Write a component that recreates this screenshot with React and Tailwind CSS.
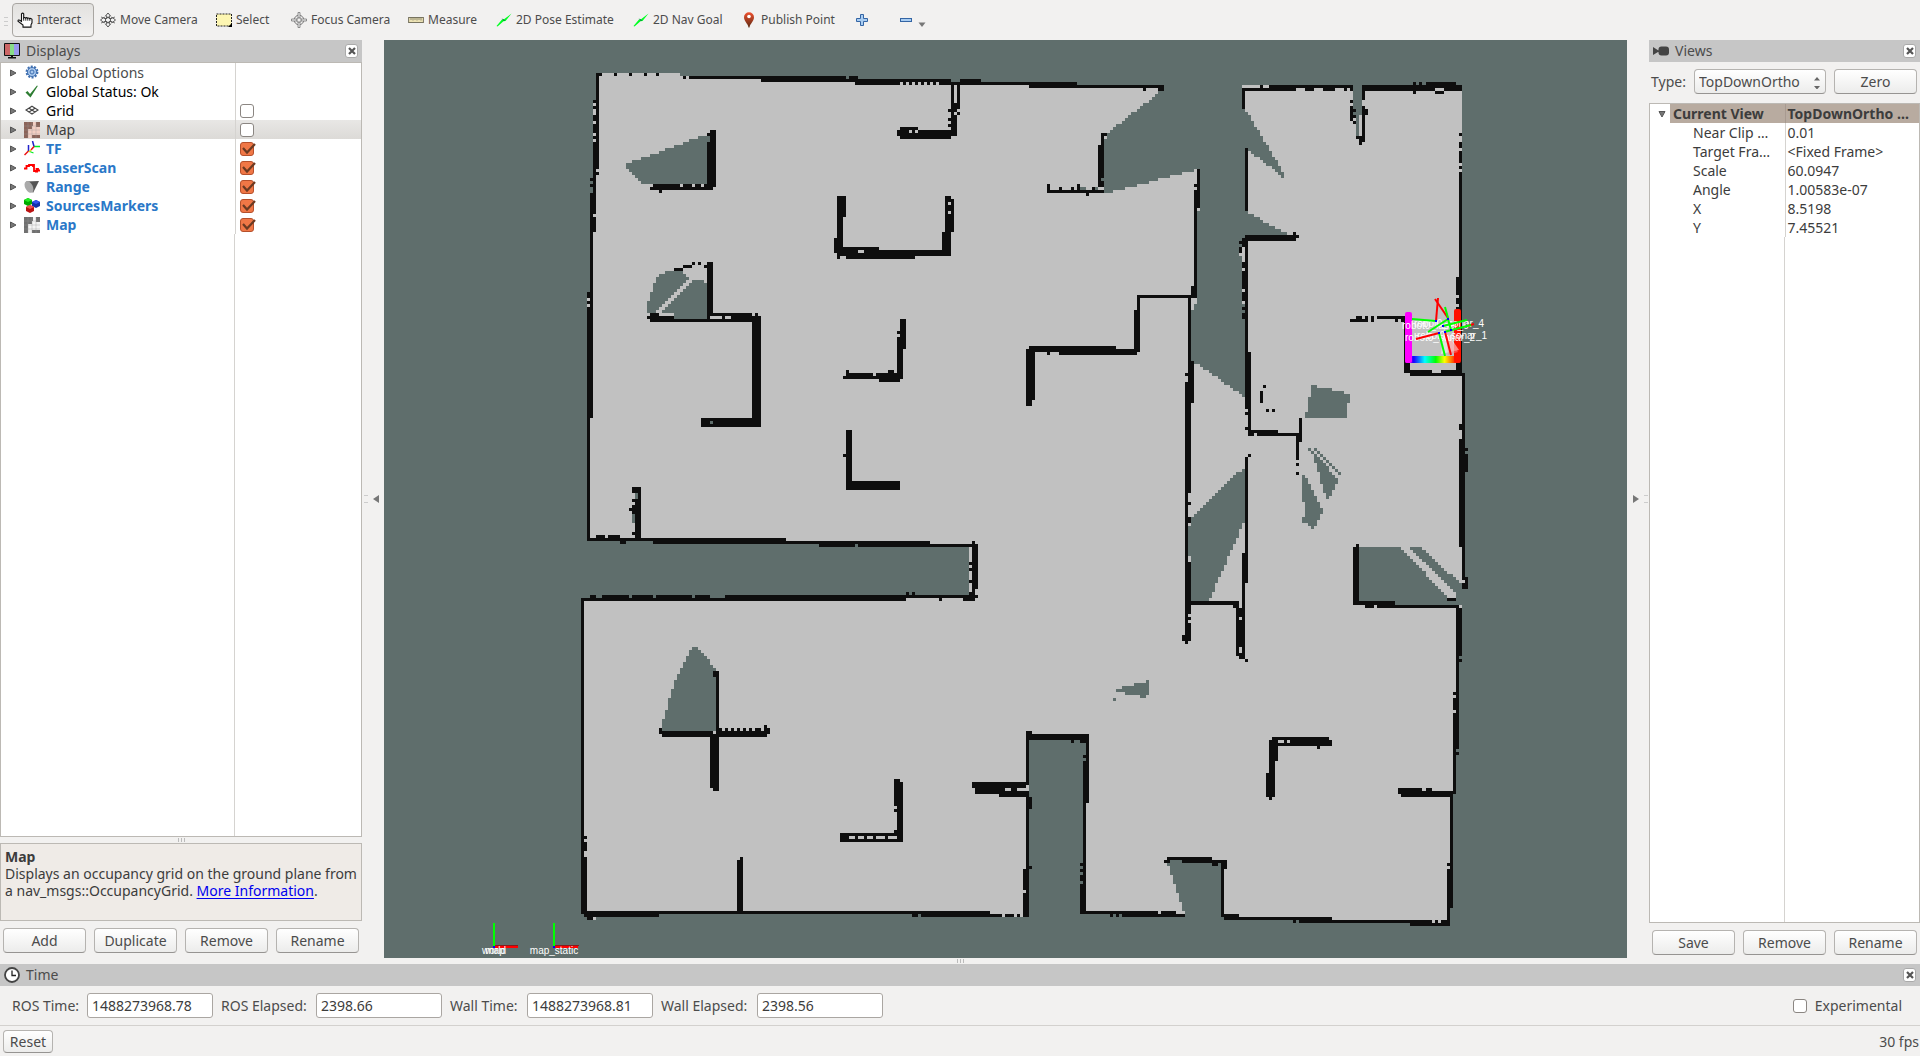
import React from "react";

const UNKNOWN = "#5f6e6c";
const FREE = "#c1c1c1";
const WALL = "#0e0e0e";

/* Occupancy grid, all values are in grid cells. */
const FREE_OUTLINE =
  "12,4 40,4 40,5 67,5 67,6 140,6 140,7 172,7 172,8 300,8 300,104 301,104 301,181 300,181 300,193 299,193 299,229 298,229 298,244 297,244 297,282 296,282 296,287 246,287 246,286 221,286 221,285 187,285 187,284 156,284 156,285 120,285 120,284 7,284 7,179 136,179 136,161 31,161 31,160 9,160 9,77 10,77 10,44 11,44 11,13 12,13";

const UNKNOWN_AREAS = [
  [[7, 161], [136, 161], [136, 178], [7, 178]],
  [[22, 34.4], [49, 24.4], [50, 25], [50, 41], [28, 41], [22, 35.6]],
  [[33, 71], [36, 70], [40, 70], [43, 73], [31, 84], [29, 84], [29, 81], [30, 78], [31, 75], [32, 73]],
  [[44, 73], [47, 73], [49, 74], [49, 86], [38, 86], [38, 84], [33.4, 84]],
  [[44, 195], [46, 195], [52, 202.5], [52, 223], [34, 223], [34, 221], [38, 207]],
  [[156, 226], [175, 226], [175, 290], [156, 290]],
  [[202, 266], [220, 266], [220, 290], [208, 290], [208, 284], [202, 267]],
  [[201, 8], [200, 10], [182, 24], [181, 27], [181, 44], [184, 43.5], [211, 36.5], [213, 36], [213, 49], [212, 50], [212, 80], [210, 83], [210, 100], [212, 101], [228, 112], [228, 60], [226, 60], [228, 58], [242.5, 58], [229, 50.5], [228, 50], [228, 30], [230, 30.5], [236, 35], [241, 39.5], [241, 37.5], [228, 16], [227, 8]],
  [[228, 136], [228, 153], [216, 180], [209, 180], [209, 155], [210, 152.5], [224, 138]],
  [[264, 8], [267, 8], [267, 18], [266, 18], [266, 25], [265, 25], [265, 18], [264, 18]],
  [[250, 130], [251, 130], [258, 138.5], [259, 140], [256, 146], [255, 146], [253, 139]],
  [[247, 138], [248, 138], [253.4, 148.5], [254, 150], [251, 156], [250, 156], [248, 154], [248, 147], [247, 147]],
  [[266, 162], [280, 162], [295, 179], [295, 181], [272, 181], [272, 180], [266, 180]],
  [[282, 162], [286, 162], [301, 175.5], [301, 181], [298, 181], [298, 178], [290, 170]],
];

const UNKNOWN_CELLS =
  "195 206 1 1;191 207 5 1;187 208 9 1;185 209 11 1;188 210 8 1;193 211 2 1;184 212 1 1;250 108 2 1;250 109 7 1;250 110 11 1;250 111 13 1;249 112 14 2;249 114 13 3;248 117 14 2;249 129 1 1;251 129 1 1;252 130 1 1;253 131 1 1;254 132 1 1;255 133 1 1;256 134 1 1;257 135 1 1;258 136 1 1;259 137 1 1;247 152 1 2;295 180 3 1";

const WALL_CELLS =
  // north-west room
  "12 4 2 1;18 4 1 1;23 4 1 1;28 4 1 1;32 4 1 1;41 5 1 1;43 5 52 1;67 6 63 1;96 5 3 1;98 7 15 1;114 7 1 1;116 7 1 1;118 7 1 1;120 7 1 1;122 7 1 1;124 7 1 1;126 7 4 1;133 6 7 1;130 7 42 1;156 8 45 1;194 9 1 1;199 9 2 1;" +
  "130 8 1 17;131 14 1 3;132 8 1 8;132 17 1 1;131 18 1 7;129 16 1 1;129 19 1 1;129 21 1 1;112 23 1 2;113 22 6 1;113 23 17 3;" +
  "12 5 1 31;12 37 1 1;11 13 1 1;11 15 1 1;11 18 1 2;11 21 1 3;11 25 1 1;11 27 1 30;10 39 1 1;10 41 1 1;10 44 1 75;9 77 1 2;9 80 1 1;9 82 1 77;" +
  "50 23 2 19;49 24 1 1;49 27 1 14;31 41 9 1;41 41 3 1;45 41 2 1;48 41 2 1;30 42 21 1;33 43 1 1;" +
  "92 45 3 7;92 52 2 10;91 59 1 5;92 62 14 1;92 63 38 2;92 65 1 1;95 65 23 1;127 57 3 8;128 46 3 11;128 45 2 1;" +
  "44 67 1 1;46 67 1 1;41 68 3 1;38 69 3 1;49 67 2 19;48 68 1 1;30 84 3 1;29 85 9 1;30 86 37 1;50 84 14 2;65 84 1 1;64 85 3 37;47 119 20 3;" +
  "113 86 2 10;112 92 2 14;112 90 1 1;94 105 19 1;95 104 9 1;95 103 1 1;105 104 8 1;109 103 2 1;106 106 7 1;" +
  "95 123 2 20;94 131 1 1;95 140 18 3;24 142 3 2;26 144 1 16;25 146 1 14;24 146 1 1;24 148 1 3;23 149 1 1;24 157 1 1;" +
  "9 159 66 1;9 158 1 1;12 158 3 1;16 158 4 1;20 160 2 1;31 160 92 1;86 161 12 1;99 161 40 1;137 160 1 1;" +
  // corridor and south-west room
  "137 161 2 15;137 176 1 4;138 178 1 1;136 167 1 1;136 169 1 1;136 173 1 1;136 177 1 1;55 178 83 1;10 178 2 1;14 178 9 1;24 178 7 1;32 178 12 1;45 178 5 1;7 179 108 1;115 177 1 1;117 177 1 1;126 179 1 1;134 179 4 1;" +
  "7 179 1 105;8 258 1 1;8 260 1 3;8 265 1 19;7 283 136 1;8 284 25 1;9 285 2 1;117 284 2 1;120 284 27 1;148 284 3 1;152 284 1 1;154 269 2 16;155 223 1 47;155 223 2 1;156 245 1 4;156 268 1 1;" +
  "51 203 2 2;52 205 1 18;33 222 1 2;34 223 17 2;50 224 19 1;52 223 17 1;53 222 1 1;55 222 1 1;57 222 1 1;59 222 1 1;61 222 1 1;63 222 1 1;65 222 2 1;68 221 1 3;69 222 1 2;50 225 3 17;51 242 2 1;" +
  "111 239 2 1;111 240 3 8;112 248 2 12;111 249 1 1;111 256 1 1;93 257 21 3;137 240 18 2;138 242 17 2;155 243 1 1;146 244 10 1;59 266 2 17;60 265 1 1;" +
  // south-east room
  "156 224 20 2;170 226 1 1;173 226 3 1;175 226 1 21;174 231 1 1;174 233 2 14;174 247 1 37;173 267 1 1;173 269 1 1;173 271 1 2;173 274 2 10;173 283 26 1;200 283 5 1;183 284 1 1;185 284 1 1;187 284 21 1;" +
  "202 265 15 1;201 266 2 1;207 266 15 1;217 267 2 1;220 267 2 2;220 269 1 16;221 284 5 1;221 285 36 1;244 286 1 1;246 286 50 1;283 287 13 1;295 269 2 13;295 282 1 5;295 267 1 1;296 243 1 30;" +
  "297 210 1 1;297 212 1 4;297 217 1 27;298 193 1 36;298 230 1 1;299 193 1 5;299 199 1 1;279 242 8 2;280 243 17 2;288 242 2 1;237 225 19 1;236 226 21 2;252 228 1 1;236 228 3 5;236 233 2 12;235 237 1 8;236 245 1 1;" +
  // centre shaft
  "208 104 1 1;209 78 1 29;210 100 1 14;208 107 2 37;208 144 1 43;209 147 1 1;209 152 1 2;208 167 2 17;209 185 1 1;208 187 2 6;207 191 1 2;208 193 1 1;210 180 16 1;224 181 2 1;225 182 3 16;226 198 2 1;228 199 1 1;227 164 1 18;228 132 1 42;229 131 1 1;" +
  "229 97 1 28;228 117 1 1;228 122 1 1;229 123 10 1;229 124 17 1;234 108 1 1;233 110 1 4;235 116 1 1;237 116 1 1;245 124 1 9;246 119 1 8;245 134 1 1;245 137 1 1;" +
  "180 24 2 1;180 24 1 18;179 28 1 14;162 43 19 1;162 41 1 2;166 42 1 1;170 42 1 1;172 41 1 2;177 42 1 1;175 44 1 1;212 36 1 13;211 43 1 36;211 41 1 1;210 75 2 4;192 78 18 1;192 78 1 19;191 83 1 14;156 95 29 1;155 96 37 1;166 97 26 1;155 97 3 16;162 97 1 1;155 113 2 2;" +
  // north-east room
  "227 9 1 7;228 29 1 21;228 58 17 2;244 57 1 1;245 58 1 1;227 59 1 3;228 60 1 56;226 60 1 1;226 62 1 2;227 67 1 2;227 70 1 6;227 77 1 3;227 82 1 1;227 84 1 2;236 8 28 1;227 9 18 1;248 9 3 1;254 9 4 1;261 9 1 1;263 9 1 1;233 8 1 1;" +
  "267 8 33 2;284 7 1 1;286 7 1 1;288 7 10 1;291 10 3 1;284 10 1 1;267 10 1 3;267 15 1 12;268 16 1 2;263 13 1 1;263 15 1 5;264 16 1 1;264 18 1 1;264 20 1 1;265 25 2 1;266 26 1 2;" +
  "299 24 1 1;299 27 1 2;299 30 1 4;299 35 1 1;299 37 1 67;298 72 1 6;298 79 1 2;298 82 1 22;263 86 6 1;265 85 2 1;268 85 1 1;270 85 1 2;272 85 10 1;278 86 1 1;280 86 2 1;281 86 2 18;283 103 7 1;293 103 5 1;283 104 18 1;" +
  "300 104 1 71;299 121 1 2;299 126 1 36;301 129 1 1;301 131 1 6;301 172 1 4;300 173 1 3;264 162 2 19;265 161 1 1;264 180 14 1;268 181 3 1;272 181 27 1;295 179 3 1;298 182 2 11";

const FREE_CELLS =
  "116 23 1 1;118 23 1 1;11 51 1 1;129 47 1 1;129 50 1 1;99 63 2 1;50 85 4 1;55 85 2 1;9 79 1 1;9 81 1 1;136 162 1 5;136 168 1 1;136 170 1 3;136 174 1 3;11 285 1 1;154 276 1 1;155 241 1 2;96 258 2 1;99 258 2 1;102 258 2 1;105 258 3 1;109 258 3 1;148 242 2 1;152 242 4 1;" +
  "290 286 1 1;292 286 1 1;239 226 2 1;242 226 1 1;209 144 1 3;209 148 1 4;209 154 1 1;209 165 1 2;209 184 1 1;209 186 1 1;226 185 1 1;226 195 1 2;231 124 1 1;210 80 1 3;226 64 1 1;227 62 1 5;227 69 1 1;227 76 1 1;227 80 1 1;291 9 3 1;266 21 1 4;299 173 2 1;42 5 1 1";

const UNKNOWN_SPECKS = "50 120 1 1;25 144 1 2;24 151 1 3;173 42 2 1;178 42 1 1;180 39 1 1;264 17 1 1;130 6 3 1";

const cellsPath = (list) =>
  list
    .split(";")
    .map((c) => {
      const [x, y, w, h] = c.split(" ");
      return `M${x} ${y}h${w}v${h}h-${w}z`;
    })
    .join("");

/* Fills a polygon with whole grid cells so that its slopes come out stepped. */
function rasterize(poly) {
  const ys = poly.map((p) => p[1]);
  let d = "";
  for (let y = Math.floor(Math.min(...ys)); y < Math.max(...ys); y++) {
    const cy = y + 0.5;
    const hits = [];
    poly.forEach(([x1, y1], i) => {
      const [x2, y2] = poly[(i + 1) % poly.length];
      if (y1 <= cy !== y2 <= cy) hits.push(x1 + ((cy - y1) * (x2 - x1)) / (y2 - y1));
    });
    hits.sort((a, b) => a - b);
    for (let i = 0; i + 1 < hits.length; i += 2) {
      const a = Math.round(hits[i]);
      const b = Math.round(hits[i + 1]);
      if (b > a) d += `M${a} ${y}h${b - a}v1h${a - b}z`;
    }
  }
  return d;
}

const AXES = [
  ["#0f0", 1412, 319, 1436, 321],
  ["#f00", 1436, 321, 1438, 298],
  ["#f00", 1435, 299, 1448, 318],
  ["#0f0", 1445, 307, 1448, 318],
  ["#0f0", 1428, 332, 1448, 319],
  ["#0f0", 1448, 319, 1451, 330],
  ["#0f0", 1443, 326, 1467, 320],
  ["#f00", 1467, 326, 1474, 324],
  ["#0f0", 1444, 332, 1471, 325],
  ["#f00", 1416, 339, 1439, 333],
  ["#0f0", 1439, 333, 1445, 356],
  ["#f00", 1445, 332, 1451, 355],
];

function MapView() {
  return (
    <svg className="block h-full w-full" viewBox="384 40 1243 918" preserveAspectRatio="xMidYMid slice" role="img" aria-label="Map view">
      <defs>
        <linearGradient id="scan" x1="0" x2="1">
          <stop offset="0" stopColor="#f0f" />
          <stop offset=".16" stopColor="#1a00ff" />
          <stop offset=".36" stopColor="#0ff" />
          <stop offset=".56" stopColor="#0f0" />
          <stop offset=".72" stopColor="#ff0" />
          <stop offset=".9" stopColor="#f30" />
        </linearGradient>
      </defs>
      <g transform="translate(560.15 60.65) scale(3.0047)" shapeRendering="crispEdges">
        <polygon points={FREE_OUTLINE} fill={FREE} />
        <path d={UNKNOWN_AREAS.map(rasterize).join("")} fill={UNKNOWN} />
        <path d={cellsPath(UNKNOWN_CELLS)} fill={UNKNOWN} />
        <path d={cellsPath(WALL_CELLS)} fill={WALL} />
        <path d={cellsPath(FREE_CELLS)} fill={FREE} />
        <path d={cellsPath(UNKNOWN_SPECKS)} fill={UNKNOWN} />
      </g>
      <rect x="1405" y="356" width="55" height="7" rx="2" fill="url(#scan)" />
      <rect x="1405" y="312" width="7" height="51" rx="2" fill="#f0f" />
      <rect x="1454" y="309" width="7" height="54" rx="2" fill="#f10" />
      <path d="M1444 328L1459 350L1441 354z" fill="#fff" opacity=".5" />
      <path d="M1446 330L1458 352L1448 355z" fill="#f88" opacity=".5" />
      <g fill="#fff" className="font-['Liberation_Sans'] text-[10px]">
        <text x="1414" y="327">robot0_sonar_4</text>
        <text x="1402" y="329">robot0_laser_0</text>
        <text x="1417" y="339">robot0_sonar_1</text>
        <text x="1405" y="341">robot0_sonar_2</text>
      </g>
      {AXES.map(([c, a, b, e, f], i) => (
        <line key={i} x1={a} y1={b} x2={e} y2={f} stroke={c} strokeWidth="2" />
      ))}
      <g fill="#00f">
        {[[1436, 321], [1448, 319], [1443, 326], [1451, 330], [1445, 332], [1439, 333]].map(([x, y]) => (
          <rect key={x} x={x - 1} y={y - 1} width="2" height="2" />
        ))}
      </g>
      <g shapeRendering="crispEdges">
        <path d="M494 945h24v3h-24zM554 945h24v3h-24z" fill="#f00" />
        <path d="M494 945h24v1h-24zM554 945h25v1h-25z" fill="#8b1a1a" />
        <path d="M493 923h2v23h-2zM553 923h2v23h-2z" fill="#0f0" />
        <path d="M493 946h2v2h-2zM553 946h2v2h-2z" fill="#00f" />
      </g>
      <g fill="#fff" textAnchor="middle" className="font-['Liberation_Sans'] text-[10px]">
        <text x="494" y="954">world</text>
        <text x="495" y="954">map</text>
        <text x="554" y="954">map_static</text>
      </g>
    </svg>
  );
}

/* ---------- icons ---------- */
const Svg = ({ children, box = "0 0 16 16", className = "h-4 w-4" }) => (
  <svg viewBox={box} className={`shrink-0 ${className}`} fill="none" aria-hidden="true">
    {children}
  </svg>
);
const HandIcon = () => (
  <Svg>
    <path d="M4.500 9.500V1.800q1.200-1.400 2.200 0V6q1-1.200 2 .2 1-1.200 2 .2 1-1 2 .3 1.300-.9 2.300.7v3.400l-1 2v2.300H6v-2L1 9.200q0-1.800 1.800-1z" fill="#fff" stroke="#111" strokeWidth="1.100" />
    <path d="M6.700 5.500v3.200M8.800 6.200v2.500M10.800 6.400v2.300M12.800 6.800v2" stroke="#111" strokeWidth=".9" />
  </Svg>
);
const MoveIcon = () => (
  <Svg>
    <path d="M8 1l2.500 3H9.200v2.500h2.600V5L15.500 8l-3.700 3V9.500H9.200V12h1.300L8 15l-2.500-3h1.300V9.500H4.200V11L.5 8l3.700-3v1.500h2.600V4H5.500z" fill="#f4f4f4" stroke="#555" />
    <circle cx="8" cy="8" r="2.600" stroke="#555" />
    <path d="M1 5l3 1M15 5l-3 1M1 11l3-1M15 11l-3-1" stroke="#777" />
  </Svg>
);
const SelectIcon = () => (
  <Svg>
    <rect x=".5" y="2" width="15" height="12" fill="#fdf6b2" stroke="#222" strokeDasharray="2 1" />
    <path d="M16 11v4h-4z" fill="#000" />
  </Svg>
);
const FocusIcon = () => (
  <Svg>
    <circle cx="8" cy="8" r="4.800" stroke="#777" />
    <circle cx="8" cy="8" r="2.500" stroke="#777" />
    <path d="M7 .5h2V5L8 6.500 7 5zM7 15.500h2V11L8 9.500 7 11zM.5 7v2H5l1.500-1L5 7zM15.500 7v2H11L9.500 8 11 7z" fill="#eee" stroke="#777" strokeWidth=".8" />
  </Svg>
);
const RulerIcon = () => (
  <Svg>
    <rect x=".6" y="5.500" width="14.800" height="5" fill="#ece2b4" stroke="#77735f" />
    <path d="M3 6v2M5 6v2.500M7 6v2M9 6v2.500M11 6v2M13 6v2.500" stroke="#77735f" strokeWidth=".8" />
  </Svg>
);
const ArrowIcon = () => (
  <Svg>
    <path d="M.5 14L6 7.500 8 7.200 15.500 1.500 9.500 9 7.500 9.300 1.500 14.500z" fill="#0f2" />
    <path d="M6.500 6.800l2 2.200" stroke="#064" />
  </Svg>
);
const PinIcon = () => (
  <Svg>
    <defs>
      <linearGradient id="pin" x1="0" x2="0" y1="0" y2="1">
        <stop offset="0" stopColor="#f0512f" />
        <stop offset="1" stopColor="#5b2a12" />
      </linearGradient>
    </defs>
    <path d="M8 .3a5 5 0 015 5c0 4-4 6.500-4.500 10.200h-1C7 11.800 3 9.300 3 5.300a5 5 0 015-5z" fill="url(#pin)" />
    <circle cx="8" cy="4.500" r="1.800" fill="#fff" />
  </Svg>
);
const PlusIcon = () => (
  <Svg>
    <path d="M6.500 2.500h3v4h4v3h-4v4h-3v-4h-4v-3h4z" fill="#a9cdf2" stroke="#3465a4" />
  </Svg>
);
const MinusIcon = () => (
  <Svg>
    <rect x="2.500" y="6.500" width="11" height="3" fill="#a9cdf2" stroke="#3465a4" />
  </Svg>
);
const MonitorIcon = () => (
  <Svg>
    <rect x="0" y="0" width="16" height="13" rx="1" fill="#111" />
    <path d="M1 1h5v11H1z" fill="#c66" />
    <path d="M6 1h4v11H6z" fill="#8d8" />
    <path d="M10 1h5v11h-5z" fill="#99e" />
    <path d="M7 13h2v1h3v1.500H4V14h3z" fill="#111" />
  </Svg>
);
const CameraIcon = () => (
  <Svg>
    <rect x="5.500" y="3.500" width="10.500" height="9" rx="3" fill="#444" />
    <path d="M0 4l5 3.300h1v1.600H5L0 12z" fill="#444" />
  </Svg>
);
const ClockIcon = () => (
  <Svg>
    <circle cx="8" cy="8" r="7" fill="#fff" stroke="#444" strokeWidth="1.800" />
    <path d="M8 3.500V8.500h4" stroke="#222" strokeWidth="1.300" />
  </Svg>
);
const GearIcon = () => (
  <Svg>
    <circle cx="8" cy="7" r="5.300" stroke="#3f6fb0" strokeWidth="2.200" strokeDasharray="2 1.300" />
    <circle cx="8" cy="7" r="4.500" fill="#a8c8ee" stroke="#3f6fb0" />
    <circle cx="8" cy="7" r="2" stroke="#3f6fb0" />
  </Svg>
);
const CheckIcon = () => (
  <Svg>
    <path d="M1.500 8.500L3.500 7l2.500 3L13 1.500l.8.4L6.500 13.500z" fill="#2e7d32" />
  </Svg>
);
const GridIcon = () => (
  <Svg>
    <path d="M8 3.200L14 7 8 11 2 7zM5 5.200l6 3.800M11 5.200L5 9" stroke="#444" strokeWidth="1.100" />
  </Svg>
);
const MapIcon = ({ dark, light }) => (
  <Svg>
    <rect width="16" height="16" fill={light} />
    <path d="M0 0h9v4H8v3H4v9H0zM12 0h4v5h-4zM8 13h8v3H8z" fill={dark} />
    <path d="M4 0v16M8 0v16M12 0v16M0 4h16M0 8h16M0 12h16" stroke="#999" strokeOpacity=".45" strokeWidth=".8" />
  </Svg>
);
const TfIcon = () => (
  <Svg>
    <path d="M10 5.500h6M4.500 10l5 2" stroke="#0e2" strokeWidth="1.300" />
    <path d="M8.500 0L10 5.500M4.500 4v6" stroke="#22c" strokeWidth="1.500" />
    <path d="M10 5.500L7 9M4.500 10L.5 14" stroke="#e11" strokeWidth="1.500" />
    <path d="M7 9l-2 2" stroke="#dd2" strokeWidth="1.300" />
  </Svg>
);
const LaserIcon = () => (
  <Svg>
    <path d="M0 8.500h2.500V6h2.500V5h5v6h2.500V9h1.500v1.500h2" stroke="#f00" strokeWidth="1.800" />
    <path d="M9 4v3M11 11.500h3" stroke="#f00" strokeWidth="1.800" />
  </Svg>
);
const RangeIcon = () => (
  <Svg>
    <path d="M2 2.500l13-.5-6 12z" fill="#555" />
    <ellipse cx="5" cy="8" rx="3.800" ry="6.300" transform="rotate(-28 5 8)" fill="#aaa" />
  </Svg>
);
const Cube = ({ x, y, c, t }) => (
  <g>
    <path d={`M${x} ${y}l4-2 4 2v4l-4 2-4-2z`} fill={c} />
    <path d={`M${x} ${y}l4-2 4 2-4 2z`} fill={t} />
  </g>
);
const MarkersIcon = () => (
  <Svg>
    <Cube x={0} y={2} c="#0a0" t="#2e2" />
    <Cube x={8} y={4} c="#13a" t="#35e" />
    <Cube x={2} y={9} c="#b11" t="#e55" />
  </Svg>
);

/* ---------- shared parts ---------- */
const BTN =
  "rounded-[4px] border border-[#b5b3b0] border-b-[#969492] bg-gradient-to-b from-white to-[#ececeb] text-[14px] leading-[21px] text-[#4c4c4c]";
const PushButton = ({ children, className = "h-[25px] w-[83px]" }) => (
  <button type="button" className={`text-center ${BTN} ${className}`}>
    {children}
  </button>
);

const DockTitle = ({ icon, children }) => (
  <header className="flex h-[22px] shrink-0 items-center bg-[#c6c6c6] pr-1 pl-1">
    {icon}
    <h2 className="ml-[6px] flex-1 text-[14px] leading-[22px]">{children}</h2>
    <button type="button" aria-label={`Close ${children}`} className="grid h-[14px] w-[13px] place-items-center rounded-[3px] border border-[#aaa] bg-white">
      <Svg box="0 0 8 8" className="h-2 w-2">
        <path d="M1 1l6 6M7 1L1 7" stroke="#555" strokeWidth="2.200" />
      </Svg>
    </button>
  </header>
);

const Triangle = ({ open }) => (
  <Svg box="0 0 8 8" className="h-2 w-2">
    <path d={open ? "M1 1.500h6L4 7z" : "M1.500 1l5.500 3-5.500 3z"} fill="#777" stroke="#555" />
  </Svg>
);

const CheckBox = ({ label, checked }) => (
  <span className="relative block h-[14px] w-[14px]">
    <input
      type="checkbox"
      aria-label={label}
      defaultChecked={checked}
      className="peer block h-[14px] w-[14px] appearance-none rounded-[3px] border border-[#8b8682] bg-white checked:border-[#b5502c] checked:bg-[#f07746]"
    />
    <svg viewBox="0 0 16 14" className="pointer-events-none absolute top-0 left-0 hidden h-[14px] w-4 peer-checked:block" fill="none" aria-hidden="true">
      <path d="M3 6l4 4.500L15 2" stroke="#6b3a22" strokeWidth="2.200" />
    </svg>
  </span>
);

const DISPLAYS = [
  { name: "Global Options", icon: <GearIcon />, tone: "text-[#4c4c4c]" },
  { name: "Global Status: Ok", icon: <CheckIcon />, tone: "text-black" },
  { name: "Grid", icon: <GridIcon />, tone: "text-black", on: false },
  { name: "Map", icon: <MapIcon dark="#8b6459" light="#f3cfc3" />, tone: "text-[#3c3c3c]", on: false, selected: true },
  { name: "TF", icon: <TfIcon />, tone: "font-bold text-[#2a78c8]", on: true },
  { name: "LaserScan", icon: <LaserIcon />, tone: "font-bold text-[#2a78c8]", on: true },
  { name: "Range", icon: <RangeIcon />, tone: "font-bold text-[#2a78c8]", on: true },
  { name: "SourcesMarkers", icon: <MarkersIcon />, tone: "font-bold text-[#2a78c8]", on: true },
  { name: "Map", icon: <MapIcon dark="#707070" light="#f4f4f4" />, tone: "font-bold text-[#2a78c8]", on: true },
];

const VIEW_PROPS = [
  ["Near Clip …", "0.01"],
  ["Target Fra…", "<Fixed Frame>"],
  ["Scale", "60.0947"],
  ["Angle", "1.00583e-07"],
  ["X", "8.5198"],
  ["Y", "7.45521"],
];

const TOOLS = [
  ["Move Camera", <MoveIcon />, "w-[116px]"],
  ["Select", <SelectIcon />, "w-[75px]"],
  ["Focus Camera", <FocusIcon />, "w-[117px]"],
  ["Measure", <RulerIcon />, "w-[88px]"],
  ["2D Pose Estimate", <ArrowIcon />, "w-[137px]"],
  ["2D Nav Goal", <ArrowIcon />, "w-[108px]"],
  ["Publish Point", <PinIcon />, "w-[113px]"],
];

const TIMES = [
  ["ROS Time:", "1488273968.78", "w-[67px]"],
  ["ROS Elapsed:", "2398.66", "w-[87px]"],
  ["Wall Time:", "1488273968.81", "w-[69px]"],
  ["Wall Elapsed:", "2398.56", "w-[88px]"],
];

const Toolbar = () => (
  <nav aria-label="Tools" className="flex h-10 shrink-0 items-start pt-[3px] pl-1 text-[12px] text-[#4c4c4c]">
    <span className="mt-[14px] flex w-2 flex-col gap-[3px]" aria-hidden="true">
      <i className="h-px w-1 bg-[#ccc]" />
      <i className="h-px w-1 bg-[#ccc]" />
      <i className="h-px w-1 bg-[#ccc]" />
    </span>
    <button type="button" aria-pressed="true" className="flex h-[34px] w-[82px] items-center gap-1 rounded-[4px] border border-[#a9a6a2] bg-gradient-to-b from-[#e2e1df] to-[#f3f2f1] pl-1">
      <HandIcon />
      Interact
    </button>
    <div className="flex h-[34px] items-center pl-[6px]">
      {TOOLS.map(([name, icon, width]) => (
        <button key={name} type="button" className={`flex h-[30px] items-center gap-1 whitespace-nowrap ${width}`}>
          {icon}
          {name}
        </button>
      ))}
      <button type="button" aria-label="Add tool" className="w-11">
        <PlusIcon />
      </button>
      <button type="button" aria-label="Remove tool" className="flex items-end gap-1">
        <MinusIcon />
        <Svg box="0 0 8 6" className="h-[6px] w-2">
          <path d="M.5.5h7L4 5z" fill="#777" />
        </Svg>
      </button>
    </div>
  </nav>
);

const DisplaysDock = () => (
  <aside className="flex w-[362px] shrink-0 flex-col">
    <DockTitle icon={<MonitorIcon />}>Displays</DockTitle>
    <div className="flex min-h-0 flex-1 flex-col border border-[#bcb9b4] bg-white">
      <table className="w-full table-fixed border-collapse">
        <colgroup>
          <col className="w-[234px]" />
          <col />
        </colgroup>
        <tbody>
          {DISPLAYS.map((d, i) => (
            <tr key={i} className={d.selected ? "h-[19px] bg-gradient-to-b from-[#e8e7e5] to-[#dcdad7]" : "h-[19px]"}>
              <td className="border-r border-[#d5d3d0] p-0">
                <div className="flex h-[19px] items-center pl-2">
                  <Triangle />
                  <span className="ml-[7px]">{d.icon}</span>
                  <span className={`ml-[6px] text-[14px] leading-[19px] ${d.tone}`}>{d.name}</span>
                </div>
              </td>
              <td className="p-0 pl-1">{d.on !== undefined && <CheckBox label={`${d.name} enabled`} checked={d.on} />}</td>
            </tr>
          ))}
        </tbody>
      </table>
      <div className="w-[234px] flex-1 border-r border-[#d5d3d0]" />
    </div>
    <div className="flex h-[6px] items-center justify-center gap-[2px]" aria-hidden="true">
      <i className="h-1 w-px bg-[#bbb]" />
      <i className="h-1 w-px bg-[#bbb]" />
      <i className="h-1 w-px bg-[#bbb]" />
    </div>
    <section className="h-[78px] border border-[#bcb9b4] bg-[#efebe7] px-1 pt-1 text-[14px] leading-[17px] text-[#3c3c3c]">
      <h3 className="font-bold">Map</h3>
      <p>
        Displays an occupancy grid on the ground plane from a nav_msgs::OccupancyGrid.{" "}
        <a href="#more" className="text-[#0000ee] underline underline-offset-2">
          More Information
        </a>
        .
      </p>
    </section>
    <div className="flex gap-2 px-[3px] pt-[7px] pb-[5px]">
      <PushButton>Add</PushButton>
      <PushButton>Duplicate</PushButton>
      <PushButton>Remove</PushButton>
      <PushButton>Rename</PushButton>
    </div>
  </aside>
);

const ViewsDock = () => (
  <aside className="flex w-[271px] shrink-0 flex-col">
    <DockTitle icon={<CameraIcon />}>Views</DockTitle>
    <div className="flex items-center gap-2 pt-[7px] pr-[3px] pb-[9px] pl-[2px]">
      <label htmlFor="view-type" className="w-[35px] text-[14px]">
        Type:
      </label>
      <span className="relative flex-1">
        <select id="view-type" className={`block h-[25px] w-full appearance-none pl-1 ${BTN}`}>
          <option>TopDownOrtho</option>
        </select>
        <svg viewBox="0 0 6 12" className="pointer-events-none absolute top-2 right-[6px] h-3 w-[6px]" aria-hidden="true">
          <path d="M0 3.500L3 0l3 3.500zM0 9l3 3.500L6 9z" fill="#666" />
        </svg>
      </span>
      <PushButton>Zero</PushButton>
    </div>
    <div className="flex min-h-0 flex-1 flex-col border border-[#bcb9b4] bg-white">
      <table className="w-full table-fixed border-collapse text-left text-[14px] leading-[19px] text-[#3c3c3c]">
        <colgroup>
          <col className="w-[135px]" />
          <col />
        </colgroup>
        <thead>
          <tr className="h-[19px]">
            <th className="border-r border-[#a89a90] p-0">
              <div className="flex h-[19px] items-center pl-2">
                <Triangle open />
                <span className="ml-1 flex-1 bg-[#b8aba0] pl-[3px] whitespace-nowrap">Current View</span>
              </div>
            </th>
            <th className="bg-[#b8aba0] p-0 pl-[2px] whitespace-nowrap">TopDownOrtho …</th>
          </tr>
        </thead>
        <tbody>
          {VIEW_PROPS.map(([k, v]) => (
            <tr key={k} className="h-[19px]">
              <td className="border-r border-[#d5d3d0] p-0 pl-[43px] whitespace-nowrap">{k}</td>
              <td className="p-0 pl-[2px]">{v}</td>
            </tr>
          ))}
        </tbody>
      </table>
      <div className="w-[135px] flex-1 border-r border-[#d5d3d0]" />
    </div>
    <div className="flex gap-2 px-[3px] pt-[7px] pb-[3px]">
      <PushButton>Save</PushButton>
      <PushButton>Remove</PushButton>
      <PushButton>Rename</PushButton>
    </div>
  </aside>
);

const Handle = ({ flip }) => (
  <div className={`flex w-[22px] shrink-0 items-center gap-[5px] ${flip ? "pl-[6px]" : "pl-[2px]"}`}>
    {!flip && <i className="h-2 w-1 border-y border-[#ccc]" />}
    <Svg box="0 0 6 8" className="h-2 w-[6px]">
      <path d={flip ? "M0 0l6 4-6 4z" : "M6 0L0 4l6 4z"} fill="#777" />
    </Svg>
    {flip && <i className="h-2 w-1 border-y border-[#ccc]" />}
  </div>
);

const TimeDock = () => (
  <section>
    <DockTitle icon={<ClockIcon />}>Time</DockTitle>
    <div className="flex h-[39px] items-center gap-2 pr-[18px] pl-3 text-[14px]">
      {TIMES.map(([name, value, width]) => (
        <React.Fragment key={name}>
          <label htmlFor={name} className={`whitespace-nowrap ${width}`}>
            {name}
          </label>
          <input
            id={name}
            readOnly
            value={value}
            className="h-[25px] w-[126px] rounded-[3px] border border-[#aaa6a2] bg-white px-1 text-[14px] text-[#3c3c3c]"
          />
        </React.Fragment>
      ))}
      <div className="ml-auto flex items-center gap-2">
        <CheckBox label="Experimental" />
        <span>Experimental</span>
      </div>
    </div>
  </section>
);

export default function App() {
  return (
    <div className="flex h-screen flex-col overflow-hidden bg-[#f2f1f0] font-['Noto_Sans',sans-serif] text-[#4c4c4c]">
      <Toolbar />
      <main className="flex min-h-0 flex-1">
        <DisplaysDock />
        <Handle />
        <div className="min-w-0 flex-1 bg-[#5f6e6c]">
          <MapView />
        </div>
        <Handle flip />
        <ViewsDock />
      </main>
      <div className="flex h-[6px] shrink-0 items-center justify-center gap-[2px]" aria-hidden="true">
        <i className="h-1 w-px bg-[#bbb]" />
        <i className="h-1 w-px bg-[#bbb]" />
        <i className="h-1 w-px bg-[#bbb]" />
      </div>
      <TimeDock />
      <footer className="flex h-[31px] shrink-0 items-center justify-between border-t border-[#d3d1ce] pl-[3px] text-[14px]">
        <PushButton className="h-[23px] w-[50px]">Reset</PushButton>
        <span className="pr-px">30 fps</span>
      </footer>
    </div>
  );
}
